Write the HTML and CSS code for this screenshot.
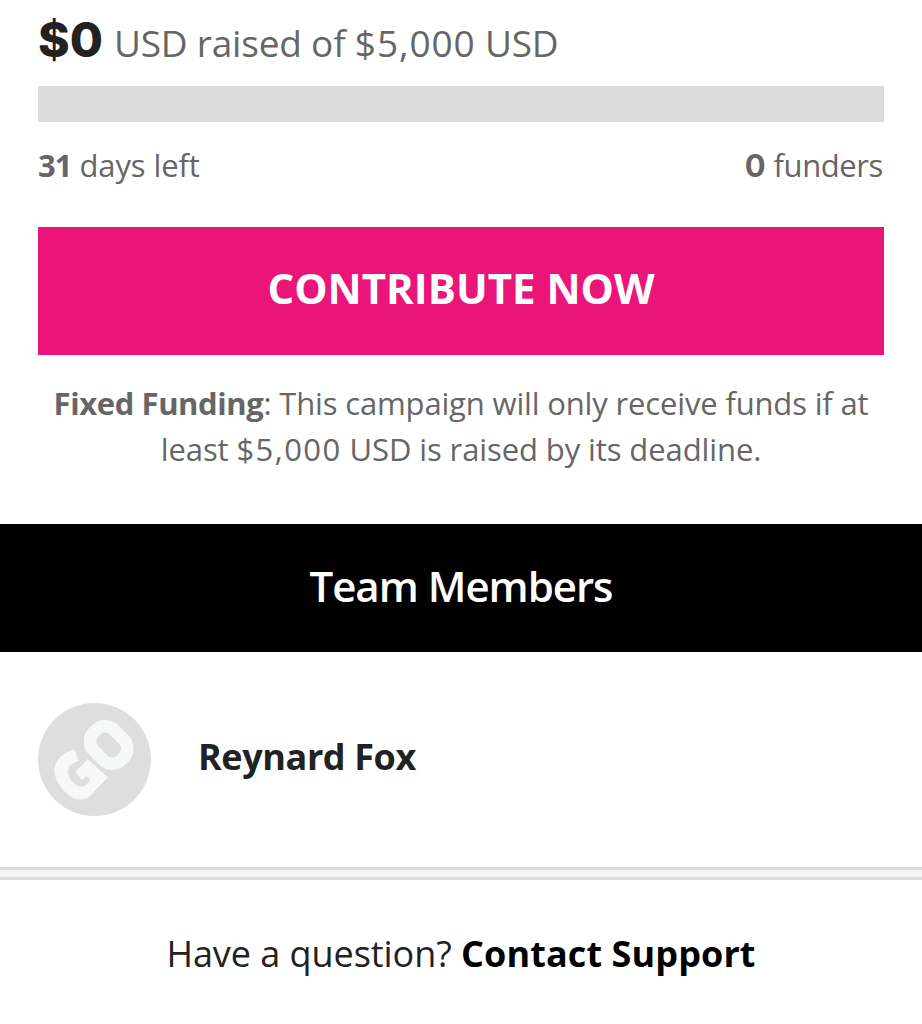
FILE: index.html
```html
<!DOCTYPE html>
<html lang="en">
<head>
<meta charset="utf-8">
<title>Campaign</title>
<link rel="stylesheet" href="styles.css">
</head>
<body>
<main>
<section class="funding">
<p class="raised"><strong class="amount">$0</strong><span class="goal">USD raised of <span class="figure">$5,000</span> USD</span></p>
<div class="progress"></div>
<div class="stats"><p><b class="days">31</b> <span class="left">days left</span></p><p><b class="count">0</b> <span class="funders">funders</span></p></div>
<button class="contribute">CONTRIBUTE NOW</button>
<p class="terms"><span class="line one"><b>Fixed Funding</b>: This campaign will only receive funds if at</span><span class="line two">least <span class="figure">$5,000</span> USD is raised by its deadline.</span></p>
</section>
<h2 class="team-title">Team Members</h2>
<section class="member">
<svg class="avatar" viewBox="0 0 113 113"><circle cx="56.5" cy="56.5" r="56.5" fill="#dedede"/><rect x="56.2" y="22.5" width="29" height="39" rx="13" transform="rotate(-45 70.7 42)" fill="none" stroke="#f7f9f8" stroke-width="12.5"/><path fill="#f7f9f8" d="M36.5 46.3L40.8 57.7C33 60 29 65 30 70C31 77 38 84 44 83.7C48 83 51 80 52.2 76.3L48.2 73L43.8 77.3L37.5 68.7L49.8 56.3L69.8 74.3L53 92C47 98 39 98 32 93C25 88 18 79 16.5 70C15 58 26 49 36.5 46.3Z"/></svg>
<span class="name">Reynard Fox</span>
</section>
<div class="divider"></div>
<footer class="support"><span class="question">Have a question?</span> <a class="contact">Contact Support</a></footer>
</main>
</body>
</html>
```
FILE: styles.css
```css
* { box-sizing: border-box; }
body { margin: 0; background: #fff; color: #666; font-family: "Open Sans", sans-serif; }
p, h2 { margin: 0; }
main { height: 1024px; overflow: hidden; }
.funding { height: 524px; padding: 0 38px; }
.raised { height: 86px; display: flex; align-items: baseline; gap: 11px; line-height: 79px; white-space: nowrap; }
.amount { color: #222; font-family: Inter, sans-serif; font-size: 48px; font-weight: 800; }
.goal { font-size: 37px; letter-spacing: -.2px; }
.goal .figure { letter-spacing: .9px; }
.progress { height: 36px; background: #dcdcdc; }
.stats { height: 105px; display: flex; justify-content: space-between; font-size: 31px; line-height: 86px; letter-spacing: -.1px; }
.days { letter-spacing: -1px; }
.count { font-family: Inter, sans-serif; font-weight: 700; }
.funders { margin-right: 1px; letter-spacing: -.4px; }
.contribute { display: block; width: 100%; height: 128px; border: 0; padding: 0 0 6px; background: #eb1478; color: #fff; font: 700 42px/120px "Open Sans", sans-serif; }
.terms { padding-top: 25px; text-align: center; font-size: 31px; line-height: 46px; white-space: nowrap; }
.line { display: block; }
.one { letter-spacing: -.16px; }
.one b { letter-spacing: -.4px; }
.two { letter-spacing: -.1px; }
.two .figure { letter-spacing: 1.4px; }
.team-title { height: 128px; background: #000; color: #fff; text-align: center; font-size: 42px; line-height: 124px; font-weight: 600; letter-spacing: -1px; }
.member { height: 215px; padding: 51px 38px 0; display: flex; gap: 47px; }
.avatar { width: 113px; height: 113px; }
.name { color: #222; font-size: 36px; font-weight: 700; line-height: 108px; letter-spacing: -.4px; }
.divider { height: 13px; border: solid #dcdcdc; border-width: 3px 0; background: #f5f5f5; }
.support { padding-top: 25px; text-align: center; color: #222; font-size: 36px; line-height: 98px; white-space: nowrap; letter-spacing: -.05px; }
.contact { color: #000; font-weight: 700; letter-spacing: .1px; }
```
